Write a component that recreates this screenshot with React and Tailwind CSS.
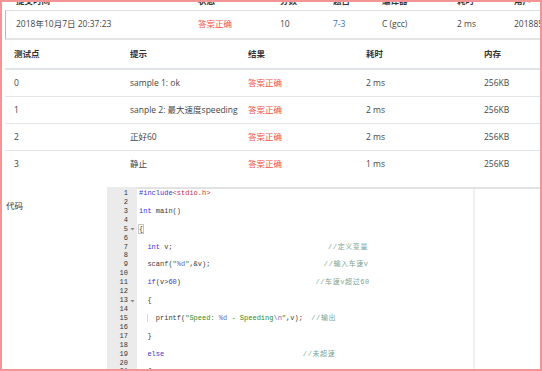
const sans = "font-['Open_Sans','Noto_Sans_CJK_SC',sans-serif]";
const mono = "font-['Liberation_Mono','Noto_Sans_CJK_SC',monospace]";

const topCols = ['w-[182px]', 'w-[82px]', 'w-[53px]', 'w-[49px]', 'w-[75px]', 'w-[57px]', 'w-[80px]'];
const caseCols = ['w-[116px]', 'w-[118px]', 'w-[118px]', 'w-[118px]', 'w-[118px]'];

const cases = [
    ['0', 'sample 1: ok', '2 ms'],
    ['1', 'sanple 2: 最大速度speeding', '2 ms'],
    ['2', '正好60', '2 ms'],
    ['3', '静止', '1 ms'],
];

const kw = 'text-[#3535d6]';
const str = 'text-[#2a8a2a]';
const esc = 'text-[#5a6fc0]';
const cm = 'text-[#7ba596] tracking-[0.6px]';

const pad = (n) => ' '.repeat(n);

const Fold = () => (
    <svg width="5" height="4" viewBox="0 0 5 4" className="ml-[2px]">
        <polygon points="0.5,1 4.5,1 2.5,3.5" fill="#8a8a8a" />
    </svg>
);

const Line = ({ children }) => (
    <div className="h-[8.93px] leading-[8.93px] whitespace-pre">{children}</div>
);

export default function App() {
    const lines = [
        <><span className={kw}>#include</span><span className="text-[#c8303a]">&lt;stdio.h&gt;</span></>,
        null,
        <><span className={kw}>int</span> main()</>,
        null,
        <span className="inline-block h-[8px] leading-[8px] shadow-[0_0_0_1px_#c4c4c4]">{'{'}</span>,
        null,
        <>{'  '}<span className={kw}>int</span>{' v;' + pad(37)}<span className={cm}>//定义变量</span></>,
        null,
        <>{'  scanf('}<span className={str}>"</span><span className={esc}>%d</span><span className={str}>"</span>{',&v);' + pad(27)}<span className={cm}>//输入车速v</span></>,
        null,
        <>{'  '}<span className={kw}>if</span>{'(v>'}<span className={kw}>60</span>{')' + pad(32)}<span className={cm}>//车速v超过60</span></>,
        null,
        <>{'  {'}</>,
        null,
        <>{'  '}<span className="shadow-[inset_1px_0_0_#dcdcdc]">{'  printf('}<span className={str}>"Speed: </span><span className={esc}>%d</span><span className={str}> - Speeding</span><span className={esc}>\n</span><span className={str}>"</span>{',v);  '}<span className={cm}>//输出</span></span></>,
        null,
        <>{'  }'}</>,
        null,
        <>{'  '}<span className={kw}>else</span>{pad(33)}<span className={cm}>//未超速</span></>,
        null,
        <>{'  {'}</>,
    ];
    const folds = [5, 13, 21];

    return (
        <div className={`w-[542px] h-[371px] overflow-hidden border-2 border-[#f39595] bg-white text-[8.5px] text-[#454545] ${sans}`}>
            {/* submission summary */}
            <div className="ml-[3px] pl-[11px] mt-[-9px] h-[16px] flex items-center font-bold text-[#333]">
                {['提交时间', '状态', '分数', '题目', '编译器', '耗时', '用户'].map((h, i) => (
                    <div key={h} className={`${topCols[i]} shrink-0`}>{h}</div>
                ))}
            </div>
            <div className="ml-[3px] mt-[1px] pl-[10px] h-[30px] flex items-center border-l border-t border-b-2 border-l-[#b8b8b8] border-t-[#dedede] border-b-[#e4e4e4]">
                <div className={`${topCols[0]} shrink-0`}>2018年10月7日 20:37:23</div>
                <div className={`${topCols[1]} shrink-0 text-[#f2524a]`}>答案正确</div>
                <div className={`${topCols[2]} shrink-0`}>10</div>
                <div className={`${topCols[3]} shrink-0 text-[#3b70c4]`}>7-3</div>
                <div className={`${topCols[4]} shrink-0`}>C (gcc)</div>
                <div className={`${topCols[5]} shrink-0`}>2 ms</div>
                <div className={`${topCols[6]} shrink-0`}>201885</div>
            </div>

            {/* test cases */}
            <div className="ml-[3px] mt-[1px]">
                <div className="h-[29px] flex items-center border-b-2 border-[#e0e3e7] font-bold text-[#333]">
                    {['测试点', '提示', '结果', '耗时', '内存'].map((h, i) => (
                        <div key={h} className={`${caseCols[i]} shrink-0 pl-[9px]`}>{h}</div>
                    ))}
                </div>
                {cases.map((c, r) => (
                    <div key={c[0]} className={`h-[27px] flex items-center ${r < 3 ? 'border-b border-[#e3e5e8]' : ''}`}>
                        <div className={`${caseCols[0]} shrink-0 pl-[9px]`}>{c[0]}</div>
                        <div className={`${caseCols[1]} shrink-0 pl-[9px]`}>{c[1]}</div>
                        <div className={`${caseCols[2]} shrink-0 pl-[9px] text-[#f2524a]`}>答案正确</div>
                        <div className={`${caseCols[3]} shrink-0 pl-[9px]`}>{c[2]}</div>
                        <div className={`${caseCols[4]} shrink-0 pl-[9px]`}>256KB</div>
                    </div>
                ))}
            </div>

            {/* source code */}
            <div className="mt-[9px] flex">
                <div className="w-[105px] shrink-0 pl-[4px] pt-[13px] leading-[12px] text-[#333]">代码</div>
                <div className={`flex-1 flex text-[7px] text-[#3a3a3a] ${mono}`}>
                    <div className="w-[30px] shrink-0 bg-[#ebebeb] pt-[2px] text-[#333]">
                        {lines.map((_, i) => (
                            <div key={i} className="h-[8.93px] leading-[8.93px] flex items-center">
                                <span className="w-[21px] text-right">{i + 1}</span>
                                {folds.includes(i + 1) && <Fold />}
                            </div>
                        ))}
                    </div>
                    <div className="flex-1 flex border-t-2 border-[#e2e2e2]">
                        <div className="w-[338px] shrink-0 pl-[2px] border-r-2 border-[#efefef]">
                            {lines.map((l, i) => (
                                <Line key={i}>{l}</Line>
                            ))}
                        </div>
                        <div className="flex-1" />
                    </div>
                </div>
            </div>
        </div>
    );
}
